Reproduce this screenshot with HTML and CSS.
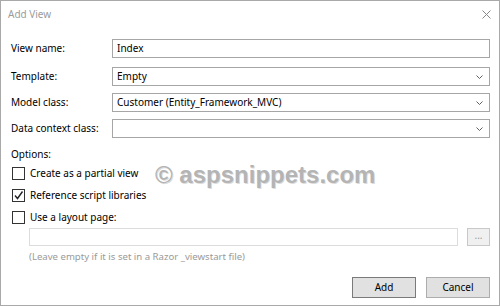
FILE: index.html
```html
<!DOCTYPE html>
<html>
<head>
<meta charset="utf-8">
<link rel="stylesheet" href="styles.css">
</head>
<body>
<div class="dialog">
  <div class="titlebar">
    <span class="title">Add View</span>
    <svg class="close" width="9" height="9" viewBox="0 0 9 9"><path d="M0.5 0.5 L8.5 8.5 M8.5 0.5 L0.5 8.5" stroke="#8a8a8a" stroke-width="1" fill="none"/></svg>
  </div>
  <div class="form">
    <div class="row first">
      <label class="lbl">View name:</label>
      <div class="field">Index</div>
    </div>
    <div class="row">
      <label class="lbl">Template:</label>
      <div class="field select">Empty<svg class="chev" width="7" height="4" viewBox="0 0 7 4"><path d="M0.5 0.5 L3.5 3.5 L6.5 0.5" stroke="#606060" fill="none"/></svg></div>
    </div>
    <div class="row">
      <label class="lbl">Model class:</label>
      <div class="field select">Customer (Entity_Framework_MVC)<svg class="chev" width="7" height="4" viewBox="0 0 7 4"><path d="M0.5 0.5 L3.5 3.5 L6.5 0.5" stroke="#606060" fill="none"/></svg></div>
    </div>
    <div class="row">
      <label class="lbl">Data context class:</label>
      <div class="field select"><svg class="chev" width="7" height="4" viewBox="0 0 7 4"><path d="M0.5 0.5 L3.5 3.5 L6.5 0.5" stroke="#606060" fill="none"/></svg></div>
    </div>
  </div>
  <div class="options">
    <div class="opt-title">Options:</div>
    <div class="check"><span class="box"></span>Create as a partial view</div>
    <div class="check"><span class="box"><svg width="11" height="11" viewBox="0 0 11 11"><path d="M2 5.5 L4.5 8.5 L9.5 1.5" stroke="#222" stroke-width="1.4" fill="none"/></svg></span>Reference script libraries</div>
    <div class="check"><span class="box"></span>Use a layout page:</div>
    <div class="layout-row">
      <div class="field disabled"></div>
      <div class="browse">...</div>
    </div>
    <div class="hint">(Leave empty if it is set in a Razor _viewstart file)</div>
  </div>
  <div class="buttons">
    <div class="btn default">Add</div>
    <div class="btn">Cancel</div>
  </div>
  <div class="watermark">© aspsnippets.com</div>
</div>
</body>
</html>
```

FILE: styles.css
```css
html, body {
  margin: 0;
  padding: 0;
  background: #ffffff;
}
body {
  font-family: "Noto Sans", "Open Sans", sans-serif;
  font-size: 10px;
  color: #000;
}
.dialog {
  position: relative;
  width: 500px;
  height: 306px;
  box-sizing: border-box;
  border: 1px solid #a9a9a9;
  background: #fff;
  overflow: hidden;
}
.titlebar {
  height: 26px;
  display: flex;
  align-items: center;
  justify-content: space-between;
  padding: 0 8px 0 7px;
}
.title {
  color: #9c9c9c;
  font-size: 10px;
}
.close {
  display: block;
}
.form {
  display: flex;
  flex-direction: column;
  gap: 7px;
  padding: 12px 9px 0 10px;
}
.row.first {
  margin-bottom: 2px;
}
.row {
  display: grid;
  grid-template-columns: 101px 1fr;
  align-items: center;
  height: 19px;
}
.lbl {
  line-height: 19px;
  white-space: nowrap;
}
.field {
  position: relative;
  height: 19px;
  box-sizing: border-box;
  border: 1px solid #a6a6a6;
  padding: 0 0 0 4px;
  line-height: 17px;
  background: #fff;
  white-space: nowrap;
}
.select .chev {
  position: absolute;
  right: 6px;
  top: 7px;
}
.options {
  padding: 8px 9px 0 10px;
}
.opt-title {
  height: 16px;
  line-height: 16px;
}
.check {
  display: flex;
  align-items: center;
  height: 22px;
}
.box {
  width: 13px;
  height: 13px;
  box-sizing: border-box;
  border: 1px solid #333;
  margin: 0 5px 0 1px;
  display: flex;
  align-items: center;
  justify-content: center;
  background: #fff;
}
.box svg {
  display: block;
}
.layout-row {
  display: flex;
  gap: 9px;
  padding-left: 18px;
}
.field.disabled {
  flex: 1;
  height: 18px;
  border-color: #dcdcdc;
}
.browse {
  width: 23px;
  height: 18px;
  box-sizing: border-box;
  border: 1px solid #c8c8c8;
  background: #f0f0f0;
  color: #999;
  font-size: 10px;
  line-height: 13px;
  text-align: center;
}
.hint {
  padding-left: 18px;
  margin-top: 3px;
  color: #9a9a9a;
  font-size: 9.6px;
  line-height: 16px;
}
.buttons {
  display: flex;
  justify-content: flex-end;
  gap: 10px;
  padding: 12px 9px 0 0;
}
.btn {
  width: 64px;
  height: 21px;
  box-sizing: border-box;
  border: 1px solid #adadad;
  background: #e1e1e1;
  text-align: center;
  line-height: 19px;
}
.btn.default {
  border-color: #7a7a7a;
}
.watermark {
  position: absolute;
  left: 154px;
  top: 160px;
  font-family: "Liberation Sans", Arial, sans-serif;
  font-weight: bold;
  font-size: 24px;
  color: #b4b4b4;
  text-shadow: 1px 1px 0 rgba(120,120,120,0.25);
  pointer-events: none;
}
```
